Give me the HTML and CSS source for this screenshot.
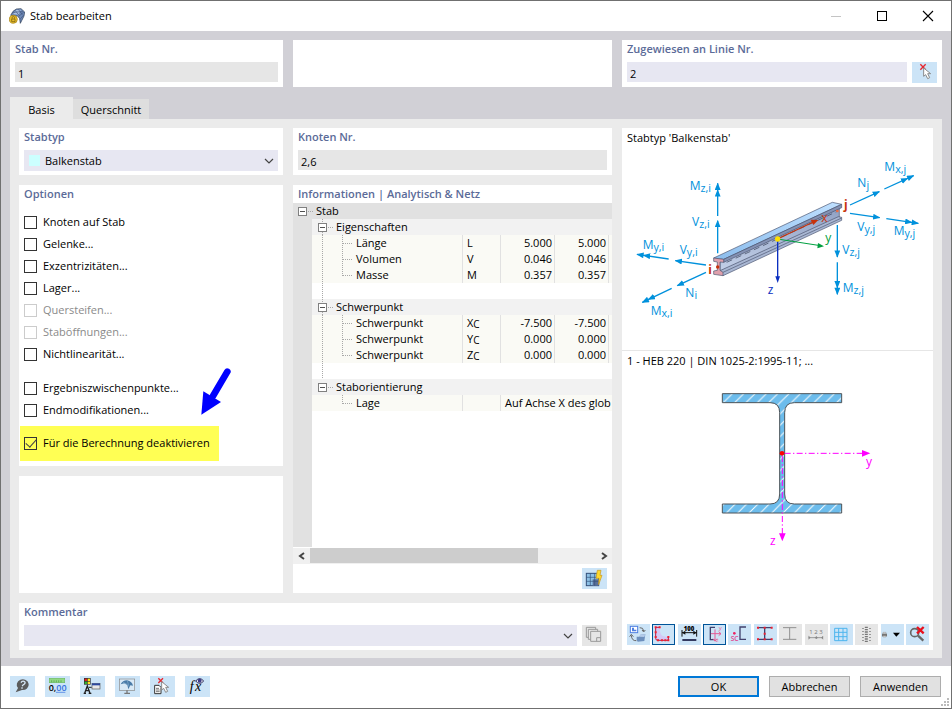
FILE: index.html
```
<!DOCTYPE html>
<html lang="de">
<head>
    <meta charset="UTF-8">
    <meta name="viewport" content="width=device-width, initial-scale=1.0">
    <title>Stab bearbeiten</title>
    <link rel="stylesheet" href="styles.css">
</head>
<body>
    <!-- tree symbols used by the information table -->
    <svg class="defs" aria-hidden="true">
        <symbol id="t-box" viewBox="0 0 20 16">
            <rect x="5.5" y="4.5" width="8" height="8" fill="#fff" stroke="#808080"/>
            <path d="M7 8.5h5" stroke="#505050"/>
            <path d="M15 8.5h5" stroke="#a8a8a8" stroke-dasharray="1 1"/>
        </symbol>
        <symbol id="t-box-mid" viewBox="0 0 20 16">
            <path d="M9.5 0v4M9.5 13v3" stroke="#a8a8a8" stroke-dasharray="1 1"/>
            <use href="#t-box" width="20" height="16"/>
        </symbol>
        <symbol id="t-line" viewBox="0 0 20 16">
            <path d="M9.5 0v16" stroke="#a8a8a8" stroke-dasharray="1 1"/>
        </symbol>
        <symbol id="t-tee" viewBox="0 0 20 16">
            <path d="M9.5 0v16M10 8.5h11" stroke="#a8a8a8" stroke-dasharray="1 1"/>
        </symbol>
        <symbol id="t-end" viewBox="0 0 20 16">
            <path d="M9.5 0v9M10 8.5h11" stroke="#a8a8a8" stroke-dasharray="1 1"/>
        </symbol>
        <symbol id="i-pick" viewBox="0 0 75 63">
            <path d="M25 7l16 16M41 7L25 23" stroke="#e8242c" stroke-width="4"/>
            <path d="M35 18v25l6-5 6 12 6-3-6-12h9z" fill="#fff" stroke="#8a8a8a" stroke-width="3"/>
        </symbol>
        <symbol id="i-caret" viewBox="0 0 12 8">
            <path d="M2 2l4 4 4-4" fill="none" stroke="#444" stroke-width="1.2"/>
        </symbol>
    </svg>

    <div class="window">
        <header class="titlebar">
            <svg class="app-icon" viewBox="0 0 48 48">
                <path d="M5 22L12 10 22 3 36 2 47 12 45 24 38 38 34 46 32 32 26 24z" fill="#6f8ab8" stroke="#26364f" stroke-width="2"/>
                <path d="M12 18L22 6 36 5 28 20z" fill="#a9bfe2"/>
                <path d="M30 24l14-11M33 34l10-12M18 7l12 15M28 4l12 16M10 15l12-3 20-1" fill="none" stroke="#40557c" stroke-width="2"/>
                <circle cx="13" cy="34" r="12" fill="#e7bd2c" stroke="#a17d10" stroke-width="2"/>
                <path d="M9 32v-4q4-5 8 0v4M8 33h10v8H8z" fill="none" stroke="#6d540c" stroke-width="2"/>
            </svg>
            <h1>Stab bearbeiten</h1>
            <div class="win-buttons">
                <button type="button" aria-label="Minimieren" disabled><svg viewBox="0 0 12 12"><path d="M1 6.5h10" stroke="#c4c4c4"/></svg></button>
                <button type="button" aria-label="Maximieren"><svg viewBox="0 0 12 12"><rect x="1.5" y="1.5" width="9" height="9" fill="none" stroke="#000"/></svg></button>
                <button type="button" aria-label="Schließen"><svg viewBox="0 0 12 12"><path d="M1 1l10 10M11 1L1 11" stroke="#000" stroke-width="1.1"/></svg></button>
            </div>
        </header>

        <main class="content">
            <div class="top-row">
                <section class="panel">
                    <label class="caption" for="stabNr">Stab Nr.</label>
                    <input class="field readonly" type="text" id="stabNr" value="1" readonly>
                </section>
                <section class="panel"></section>
                <section class="panel">
                    <label class="caption" for="linieNr">Zugewiesen an Linie Nr.</label>
                    <div class="field-row">
                        <input class="field" type="text" id="linieNr" value="2">
                        <button type="button" class="tool" aria-label="Linie auswählen"><svg viewBox="0 0 75 63"><use href="#i-pick" width="75" height="63"/></svg></button>
                    </div>
                </section>
            </div>

            <nav class="tabs">
                <button type="button" class="tab active">Basis</button>
                <button type="button" class="tab">Querschnitt</button>
            </nav>

            <div class="page">
                <section class="panel type">
                    <label class="caption" for="stabtyp">Stabtyp</label>
                    <div class="combo">
                        <span class="swatch"></span>
                        <select id="stabtyp"><option>Balkenstab</option></select>
                        <svg class="caret"><use href="#i-caret"/></svg>
                    </div>
                </section>

                <section class="panel nodes">
                    <label class="caption" for="knotenNr">Knoten Nr.</label>
                    <input class="field readonly" type="text" id="knotenNr" value="2,6" readonly>
                </section>

                <section class="panel options">
                    <h2 class="caption">Optionen</h2>
                    <div class="checks">
                        <label><input type="checkbox">Knoten auf Stab</label>
                        <label><input type="checkbox">Gelenke...</label>
                        <label><input type="checkbox">Exzentrizitäten...</label>
                        <label><input type="checkbox">Lager...</label>
                        <label class="off"><input type="checkbox" disabled>Quersteifen...</label>
                        <label class="off"><input type="checkbox" disabled>Staböffnungen...</label>
                        <label><input type="checkbox">Nichtlinearität...</label>
                    </div>
                    <div class="checks">
                        <label><input type="checkbox">Ergebniszwischenpunkte...</label>
                        <label><input type="checkbox">Endmodifikationen...</label>
                    </div>
                    <div class="marked">
                        <label><input type="checkbox" checked>Für die Berechnung deaktivieren</label>
                        <svg class="pointer" viewBox="0 0 90 141">
                            <path d="M79 11L36 84" stroke="#0000ff" stroke-width="20" stroke-linecap="round"/>
                            <path d="M1 140L7 70 60 102z" fill="#0000ff"/>
                        </svg>
                    </div>
                </section>

                <section class="panel blank"></section>

                <section class="panel info">
                    <h2 class="caption">Informationen | Analytisch &amp; Netz</h2>
                    <div class="tree">
                        <table>
                            <colgroup>
                                <col class="c-edge"><col class="c-name"><col class="c-sym"><col class="c-val"><col class="c-val"><col>
                            </colgroup>
                            <tbody>
                                <tr class="root"><th colspan="6"><svg><use href="#t-box"/></svg>Stab</th></tr>
                                <tr class="group"><td></td><th colspan="5"><svg><use href="#t-box-mid"/></svg>Eigenschaften</th></tr>
                                <tr><td></td><th><svg><use href="#t-line"/></svg><svg><use href="#t-tee"/></svg>Länge</th><td>L</td><td>5.000</td><td>5.000</td><td></td></tr>
                                <tr><td></td><th><svg><use href="#t-line"/></svg><svg><use href="#t-tee"/></svg>Volumen</th><td>V</td><td>0.046</td><td>0.046</td><td></td></tr>
                                <tr><td></td><th><svg><use href="#t-line"/></svg><svg><use href="#t-end"/></svg>Masse</th><td>M</td><td>0.357</td><td>0.357</td><td></td></tr>
                                <tr class="space"><td></td><th colspan="5"><svg><use href="#t-line"/></svg></th></tr>
                                <tr class="group"><td></td><th colspan="5"><svg><use href="#t-box-mid"/></svg>Schwerpunkt</th></tr>
                                <tr><td></td><th><svg><use href="#t-line"/></svg><svg><use href="#t-tee"/></svg>Schwerpunkt</th><td>X<sub>C</sub></td><td>-7.500</td><td>-7.500</td><td></td></tr>
                                <tr><td></td><th><svg><use href="#t-line"/></svg><svg><use href="#t-tee"/></svg>Schwerpunkt</th><td>Y<sub>C</sub></td><td>0.000</td><td>0.000</td><td></td></tr>
                                <tr><td></td><th><svg><use href="#t-line"/></svg><svg><use href="#t-end"/></svg>Schwerpunkt</th><td>Z<sub>C</sub></td><td>0.000</td><td>0.000</td><td></td></tr>
                                <tr class="space"><td></td><th colspan="5"><svg><use href="#t-line"/></svg></th></tr>
                                <tr class="group"><td></td><th colspan="5"><svg><use href="#t-box"/></svg>Staborientierung</th></tr>
                                <tr><td></td><th><svg></svg><svg><use href="#t-end"/></svg>Lage</th><td></td><td class="text" colspan="3">Auf Achse X des glob</td></tr>
                            </tbody>
                        </table>
                    </div>
                    <div class="scrollbar">
                        <button type="button" aria-label="Nach links"><svg viewBox="0 0 8 8"><path d="M6 1L2 4l4 3" fill="none" stroke="#444" stroke-width="2"/></svg></button>
                        <div class="track"><div class="thumb"></div></div>
                        <button type="button" aria-label="Nach rechts"><svg viewBox="0 0 8 8"><path d="M2 1l4 3-4 3" fill="none" stroke="#444" stroke-width="2"/></svg></button>
                    </div>
                    <div class="info-tools">
                        <button type="button" class="tool" aria-label="Netz berechnen">
                            <svg viewBox="0 0 75 63">
                                <rect x="13" y="16" width="37" height="37" fill="#8cc0e6" stroke="#33507a" stroke-width="3"/>
                                <path d="M32 34h18v19H32z" fill="#5a7099"/>
                                <path d="M25 16v37M38 16v37M13 28h37M13 40h37" stroke="#33507a" stroke-width="2"/>
                                <path d="M46 7h11l-3 15h6L50 50l1-19h-9z" fill="#ffd92e" stroke="#c9961a" stroke-width="2"/>
                            </svg>
                        </button>
                    </div>
                </section>

                <section class="panel comment">
                    <label class="caption" for="kommentar">Kommentar</label>
                    <div class="field-row">
                        <div class="combo">
                            <select id="kommentar"><option></option></select>
                            <svg class="caret"><use href="#i-caret"/></svg>
                        </div>
                        <button type="button" class="tool inactive" aria-label="Kommentare" disabled>
                            <svg viewBox="0 0 75 63">
                                <path d="M20 37h-7V7h28v6M26 43h-7V13h28v6" fill="none" stroke="#999" stroke-width="3"/>
                                <path d="M26 19h30v30H26zM56 38H44v11" fill="none" stroke="#999" stroke-width="3"/>
                            </svg>
                        </button>
                    </div>
                </section>

                <section class="panel preview">
                    <div class="beam">
                        <h3>Stabtyp 'Balkenstab'</h3>
                        <svg viewBox="0 0 933 600">
                            <defs>
                                <linearGradient id="top" x1="0" y1="1" x2="1" y2="0"><stop offset="0" stop-color="#8dbdec"/><stop offset="1" stop-color="#bfe0ff"/></linearGradient>
                                <linearGradient id="web" x1="0" y1="0" x2="0" y2="1"><stop offset="0" stop-color="#8e9fc2"/><stop offset="1" stop-color="#c3d0e8"/></linearGradient>
                                <marker id="a" markerUnits="userSpaceOnUse" viewBox="0 0 20 16" markerWidth="22" markerHeight="18" refX="18" refY="8" orient="auto"><path d="M0 0l20 8-20 8z" fill="#0091dc"/></marker>
                                <marker id="aa" markerUnits="userSpaceOnUse" viewBox="0 0 38 16" markerWidth="42" markerHeight="18" refX="36" refY="8" orient="auto"><path d="M0 0l20 8-20 8zM18 0l20 8-20 8z" fill="#0091dc"/></marker>
                            </defs>
                            <g transform="translate(-6 0)">
                                <!-- beam body -->
                                <g stroke="#4b5470" stroke-width="2" stroke-linejoin="round">
                                    <path d="M300 330L658 168 658 202 300 364z" fill="url(#web)"/>
                                    <path d="M300 362L655 200 665 202 665 211 309 377z" fill="#a9b7d3"/>
                                    <path d="M309 367L665 204" fill="none"/>
                                    <path d="M281 324L637 157 665 163 311 328z" fill="url(#top)"/>
                                    <path d="M311 328L665 163 665 173 311 337z" fill="#8492b4"/>
                                    <path d="M281 324l30 4v9l-11-1v25l9 6v10l-28-4v-10l11-2v-25l-11-2z" fill="#dfa0ac"/>
                                </g>
                                <path d="M320 337L650 185" stroke="#333c55" stroke-width="2" stroke-dasharray="18 12"/>
                                <circle cx="293" cy="351" r="5" fill="#c8320a"/>
                                <circle cx="652" cy="183" r="4" fill="#f06a3c"/>
                                <!-- internal forces -->
                                <g stroke="#0091dc" stroke-width="4" fill="none">
                                    <path d="M293 198V100" marker-end="url(#aa)"/>
                                    <path d="M293 310V212" marker-end="url(#a)"/>
                                    <path d="M258 345L166 332" marker-end="url(#a)"/>
                                    <path d="M146 327L51 313" marker-end="url(#aa)"/>
                                    <path d="M258 367L172 407" marker-end="url(#a)"/>
                                    <path d="M155 415L67 457" marker-end="url(#aa)"/>
                                    <path d="M690 165L778 125" marker-end="url(#a)"/>
                                    <path d="M793 117L881 77" marker-end="url(#aa)"/>
                                    <path d="M690 190L779 203" marker-end="url(#a)"/>
                                    <path d="M799 206L895 220" marker-end="url(#aa)"/>
                                    <path d="M652 225V321" marker-end="url(#a)"/>
                                    <path d="M652 337V433" marker-end="url(#aa)"/>
                                </g>
                                <!-- local axes -->
                                <path d="M472 267L580 216" stroke="#c8320a" stroke-width="4"/><path d="M595 210l-23-1 8 16z" fill="#c8320a"/>
                                <path d="M472 267L595 286" stroke="#00a040" stroke-width="3"/><path d="M612 289l-18-10-2 16z" fill="#00a040"/>
                                <path d="M473 267V385" stroke="#0a2fc0" stroke-width="4"/><path d="M473 399l-7-20h14z" fill="#0a2fc0"/>
                                <circle cx="473" cy="267" r="8" fill="#ffe000"/>
                                <g class="force">
                                    <text x="209" y="121">M<tspan dy="6">z,i</tspan></text>
                                    <text x="216" y="229">V<tspan dy="6">z,i</tspan></text>
                                    <text x="68" y="298">M<tspan dy="6">y,i</tspan></text>
                                    <text x="179" y="312">V<tspan dy="6">y,i</tspan></text>
                                    <text x="196" y="441">N<tspan dy="6">i</tspan></text>
                                    <text x="92" y="494">M<tspan dy="6">x,i</tspan></text>
                                    <text x="712" y="111">N<tspan dy="6">j</tspan></text>
                                    <text x="793" y="62">M<tspan dy="6">x,j</tspan></text>
                                    <text x="712" y="242">V<tspan dy="6">y,j</tspan></text>
                                    <text x="821" y="256">M<tspan dy="6">y,j</tspan></text>
                                    <text x="667" y="313">V<tspan dy="6">z,j</tspan></text>
                                    <text x="668" y="425">M<tspan dy="6">z,j</tspan></text>
                                </g>
                                <g class="axis">
                                    <text class="end" x="265" y="372">i</text>
                                    <text class="end" x="672" y="177">j</text>
                                    <text x="604" y="215" fill="#c8320a">x</text>
                                    <text x="616" y="276" fill="#00a040">y</text>
                                    <text x="443" y="431" fill="#0a2fc0">z</text>
                                </g>
                            </g>
                        </svg>
                    </div>
                    <div class="section">
                        <h3>1 - HEB 220 | DIN 1025-2:1995-11; ...</h3>
                        <svg viewBox="0 0 933 564">
                            <defs>
                                <pattern id="hatch" width="34" height="34" patternUnits="userSpaceOnUse" patternTransform="translate(8 14)">
                                    <rect width="34" height="34" fill="#6cbcec"/>
                                    <path d="M-2 36L36 -2M-5 5L5 -5M29 39L39 29" stroke="#fff" stroke-width="3"/>
                                </pattern>
                            </defs>
                            <g transform="translate(-6 -96)">
                                <path d="M307 161H665V188H523Q494 188 494 218V462Q494 492 523 492H665V519H307V492H450Q479 492 479 462V218Q479 188 450 188H307z" fill="url(#hatch)" stroke="#4c5358" stroke-width="3"/>
                                <path d="M494 340H728" stroke="#ff00ff" stroke-width="3" stroke-dasharray="18 7 4 7"/>
                                <path d="M487 348V582" stroke="#ff00ff" stroke-width="3" stroke-dasharray="18 7 4 7"/>
                                <path d="M726 330L751 340 726 350zM477 580L487 604 497 580z" fill="#ff00ff"/>
                                <circle cx="486" cy="340" r="7" fill="#ff0000"/>
                                <g class="axis" fill="#ff00ff">
                                    <text x="738" y="377">y</text>
                                    <text x="450" y="614">z</text>
                                </g>
                            </g>
                        </svg>
                    </div>
                    <div class="preview-tools">
                        <button type="button" class="tool" aria-label="Ansicht wechseln">
                            <svg viewBox="0 0 69 63">
                                <rect x="10" y="7" width="22" height="19" fill="#fff" stroke="#4f7fe0" stroke-width="3"/><path d="M15 22V11h6v6h7v5z" fill="#4f7fe0"/>
                                <path d="M38 11q11-1 12 10M45 18l5 6 5-6M28 50q-14 1-15-16M8 38l5-7 6 7" fill="none" stroke="#666" stroke-width="3"/>
                                <path d="M29 38l8 0 3-6 15-1-3 20-20 2-3-5z" fill="#6d8fbd"/><path d="M37 38l3-6 15-1-3 8z" fill="#b4cbea"/>
                            </svg>
                        </button>
                        <button type="button" class="tool on" aria-label="Querschnitt">
                            <svg viewBox="0 0 69 63">
                                <path d="M11 9h12q0 26 12 28l15 2v10H11z" fill="#d3c9f5"/>
                                <path d="M24 10H11v33q0 6 6 6h32V38" fill="none" stroke="#b01c48" stroke-width="3"/>
                                <path d="M8 7h6v6H8zM20 7h6v6h-6zM8 22h6v6H8zM8 36h6v6H8zM15 46h6v6h-6zM27 46h6v6h-6zM37 46h6v6h-6zM46 46h6v6h-6zM46 36h6v6h-6z" fill="#f02030"/>
                            </svg>
                        </button>
                        <button type="button" class="tool" aria-label="Bemaßung">
                            <svg viewBox="0 0 69 63">
                                <text class="dim" x="33" y="20">100</text>
                                <path d="M12 18v20M56 18v20M12 26h44" stroke="#111" stroke-width="3"/><path d="M12 26l10-6v12zM56 26l-10-6v12z" fill="#111"/>
                                <path d="M13 48h42" stroke="#333a60" stroke-width="6"/>
                            </svg>
                        </button>
                        <button type="button" class="tool on" aria-label="Hauptachsen">
                            <svg viewBox="0 0 69 63">
                                <path d="M36 10H22v37h12" fill="none" stroke="#42426e" stroke-width="4"/>
                                <path d="M24 29h30M36 16v36M47 23l7 6-7 6M30 44l6 7 6-7" fill="none" stroke="#e65a96" stroke-width="3"/>
                                <text class="tiny" x="47" y="19">y</text><text class="tiny" x="38" y="53">z</text>
                            </svg>
                        </button>
                        <button type="button" class="tool" aria-label="Schubmittelpunkt">
                            <svg viewBox="0 0 69 63">
                                <path d="M54 9H36v37h18" fill="none" stroke="#42426e" stroke-width="4"/>
                                <circle cx="19" cy="28" r="4" fill="#ee2060"/><text class="sc" x="8" y="52">SC</text>
                            </svg>
                        </button>
                        <button type="button" class="tool" aria-label="Punkte">
                            <svg viewBox="0 0 69 63">
                                <path d="M11 11h42M11 46h42M32 11v35" stroke="#42426e" stroke-width="4"/>
                                <path d="M9 8h6v6H9zM29 8h6v6h-6zM50 8h6v6h-6zM29 26h6v6h-6zM9 43h6v6H9zM29 43h6v6h-6zM50 43h6v6h-6z" fill="#ee2030"/>
                            </svg>
                        </button>
                        <button type="button" class="tool inactive" aria-label="Spannungspunkte" disabled>
                            <svg viewBox="0 0 69 63"><path d="M12 11h40M12 46h40M32 11v35" stroke="#909090" stroke-width="3"/></svg>
                        </button>
                        <button type="button" class="tool inactive" aria-label="Nummerierung" disabled>
                            <svg viewBox="0 0 69 63">
                                <text class="num" x="33" y="29">1 2 3</text>
                                <path d="M11 41h43" stroke="#999" stroke-width="3"/><path d="M11 36v10l5-5zM30 41l4-4 4 4-4 4zM54 36v10l-5-5z" fill="#888" stroke="#888"/>
                            </svg>
                        </button>
                        <button type="button" class="tool" aria-label="Raster">
                            <svg viewBox="0 0 69 63"><path d="M14 13h37v37H14zM26 13v37M39 13v37M14 25h37M14 38h37" fill="none" stroke="#4db5ee" stroke-width="3"/></svg>
                        </button>
                        <button type="button" class="tool inactive" aria-label="Werte" disabled>
                            <svg viewBox="0 0 69 63">
                                <path d="M34 8v46" stroke="#777" stroke-width="9" stroke-dasharray="4 3"/>
                                <path d="M24 12v40M45 12v40" stroke="#999" stroke-width="6" stroke-dasharray="3 6"/>
                            </svg>
                        </button>
                        <button type="button" class="tool" aria-label="Drucken">
                            <svg viewBox="0 0 69 63">
                                <path d="M3 29h15v8H3z" fill="#777"/><path d="M6 25h9v4H6zM6 35h9v4H6z" fill="#ddd" stroke="#777"/>
                                <path d="M36 26h21L46 38z" fill="#000"/>
                            </svg>
                        </button>
                        <button type="button" class="tool" aria-label="Ansicht zurücksetzen">
                            <svg viewBox="0 0 69 63">
                                <circle cx="26" cy="26" r="12" fill="none" stroke="#666" stroke-width="5"/>
                                <path d="M36 35l16 15" stroke="#666" stroke-width="7"/>
                                <path d="M33 9l20 19M53 9L33 28" stroke="#e8101c" stroke-width="7"/>
                            </svg>
                        </button>
                    </div>
                </section>
            </div>
        </main>

        <footer class="footer">
            <div class="footer-tools">
                <button type="button" class="tool" aria-label="Hilfe">
                    <svg viewBox="0 0 75 63">
                        <path d="M17 49l7-13A18 16 0 1 1 36 42z" fill="#5c5c5c"/>
                        <path d="M33 20q3-6 9-4 6 3 1 8l-5 4-1 3M36 34v4" fill="none" stroke="#d8e8f6" stroke-width="4"/>
                    </svg>
                </button>
                <button type="button" class="tool" aria-label="Einheiten und Dezimalstellen">
                    <svg viewBox="0 0 75 63">
                        <rect x="13" y="7" width="46" height="13" fill="#91d884" stroke="#6cbc60" stroke-width="2"/>
                        <path d="M20 13v6M27 13v6M34 13v6M41 13v6M48 13v6" stroke="#4a9a40" stroke-width="2"/>
                        <text class="zero" x="11" y="45">0,<tspan fill="#3470e0">00</tspan></text>
                        <path d="M33 49h28" stroke="#3470e0" stroke-width="2"/>
                    </svg>
                </button>
                <button type="button" class="tool" aria-label="Darstellung">
                    <svg viewBox="0 0 75 63">
                        <path d="M12 6h20v20H12z" fill="#333"/><path d="M14 8h7v7h-7z" fill="#e02020"/><path d="M23 8h7v7h-7z" fill="#ffe020"/><path d="M14 17h7v7h-7z" fill="#30b030"/><path d="M23 17h7v7h-7z" fill="#ffe020"/>
                        <path d="M14 52l8-22 8 22M17 44h10M11 52h7M26 52h8" fill="none" stroke="#222" stroke-width="4"/>
                        <rect x="36" y="22" width="24" height="17" fill="#e8e8e8" stroke="#555" stroke-width="2"/><path d="M36 22h24v6H36z" fill="#2b48a0"/><path d="M27 34h8" stroke="#222" stroke-width="3"/>
                    </svg>
                </button>
                <button type="button" class="tool" aria-label="Ansicht">
                    <svg viewBox="0 0 75 63">
                        <rect x="13" y="9" width="46" height="34" fill="#d9e9f6" stroke="#888" stroke-width="2"/>
                        <path d="M36 43v7M28 52h17" stroke="#777" stroke-width="4"/>
                        <path d="M17 25q6-12 19-12 16 4 18 16l-8-1-6 12-3-13-9-5z" fill="#4a7ba8"/><path d="M24 19l14 7M37 14l5 18" stroke="#86aecf" stroke-width="2"/>
                    </svg>
                </button>
                <button type="button" class="tool" aria-label="Objekt wählen">
                    <svg viewBox="0 0 75 63">
                        <path d="M25 7l14 14M39 7L25 21" stroke="#e8242c" stroke-width="4"/>
                        <path d="M14 28h13l6 6v19H14z" fill="#fff" stroke="#333" stroke-width="3"/><path d="M18 37h9M18 42h11M18 47h11" stroke="#333" stroke-width="2"/>
                        <path d="M35 17v25l6-5 6 12 6-3-6-12h9z" fill="#fff" stroke="#8a8a8a" stroke-width="3"/>
                    </svg>
                </button>
                <button type="button" class="tool" aria-label="Formeln">
                    <svg viewBox="0 0 75 63">
                        <text class="fx" x="14" y="45">f<tspan x="30">x</tspan></text>
                        <path d="M32 15q12-14 24 0-12 14-24 0z" fill="#fff" stroke="#28285a" stroke-width="3"/><circle cx="44" cy="14" r="6" fill="#3c3c86"/>
                    </svg>
                </button>
            </div>
            <div class="actions">
                <button type="button" class="btn primary">OK</button>
                <button type="button" class="btn">Abbrechen</button>
                <button type="button" class="btn">Anwenden</button>
            </div>
            <svg class="grip" viewBox="0 0 8 8"><path d="M6 0h2v2H6zM3 3h2v2H3zM6 3h2v2H6zM0 6h2v2H0zM3 6h2v2H3zM6 6h2v2H6z" fill="#bbb"/></svg>
        </footer>
    </div>
</body>
</html>
```
FILE: styles.css
```
* {
    box-sizing: border-box;
}

body {
    margin: 0;
    font-family: "Open Sans", "Noto Sans", sans-serif;
    font-size: 11px;
    line-height: 16px;
    color: #000;
}

button, input, select {
    font: inherit;
    color: inherit;
    margin: 0;
}

button {
    padding: 0;
    border: none;
    background: none;
}

h1, h2, h3 {
    margin: 0;
    font-size: 11px;
    font-weight: normal;
}

svg {
    display: block;
}

.defs {
    position: absolute;
    width: 0;
    height: 0;
}

.window {
    display: flex;
    flex-direction: column;
    min-height: 100vh;
    border: 1px solid #707070;
    background-color: #fff;
}

/* title bar */
.titlebar {
    display: flex;
    align-items: center;
    height: 30px;
    padding-left: 8px;
}

.app-icon {
    width: 16px;
    height: 16px;
    margin-right: 5px;
}

.titlebar h1 {
    flex: 1;
}

.win-buttons {
    display: flex;
}

.win-buttons button {
    display: flex;
    align-items: center;
    justify-content: center;
    width: 46px;
    height: 28px;
}

.win-buttons svg {
    width: 12px;
    height: 12px;
}

/* main area */
.content {
    flex: 1;
    display: flex;
    flex-direction: column;
    padding: 9px 9px 8px;
    background-color: #d1d0d6;
}

.top-row {
    display: grid;
    grid-template-columns: 273fr 319fr 320fr;
    gap: 10px;
}

.panel {
    min-width: 0;
    padding: 0 5px 4px;
    background-color: #fff;
}

.caption {
    display: block;
    height: 22px;
    line-height: 18px;
    font-weight: 600;
    color: #5b6b98;
}

.field {
    display: block;
    width: 100%;
    height: 20px;
    padding: 2px 3px 0;
    border: none;
    background-color: #e7e7f2;
}

.field.readonly {
    background-color: #e6e6e6;
}

.field-row {
    display: flex;
    gap: 5px;
}

.field-row .field, .field-row .combo {
    flex: 1;
    width: auto;
    min-width: 0;
}

.combo {
    display: flex;
    align-items: center;
    height: 21px;
    padding: 0 3px 0 5px;
    background-color: #e7e7f2;
}

.combo select {
    flex: 1;
    min-width: 0;
    height: 21px;
    padding: 0 0 0 5px;
    border: none;
    background: none;
    appearance: none;
}

.swatch {
    width: 11px;
    height: 11px;
    background-color: #ccffff;
}

.caret {
    width: 12px;
    height: 8px;
    pointer-events: none;
}

.tool {
    flex: none;
    width: 25px;
    height: 21px;
    background-color: #cce4f7;
}

.tool svg {
    width: 100%;
    height: 100%;
}

.tool.inactive {
    background-color: #e6e6e6;
}

.tool.on {
    outline: 1px solid #005499;
    outline-offset: -1px;
}

/* tabs */
.tabs {
    display: flex;
    align-items: flex-end;
    height: 32px;
    padding-top: 10px;
}

.tab {
    width: 76px;
    height: 20px;
    padding-top: 1px;
    background-color: #dedede;
}

.tab.active {
    width: 63px;
    height: 22px;
    padding-top: 3px;
    background-color: #ebebeb;
}

.page {
    flex: 1;
    display: grid;
    grid-template-columns: 264fr 319fr 311fr;
    grid-template-rows: auto auto 1fr auto;
    grid-template-areas:
        "type nodes preview"
        "options info preview"
        "blank info preview"
        "comment comment preview";
    gap: 10px;
    padding: 9px 9px 8px;
    background-color: #ebebeb;
}

.type { grid-area: type; }
.nodes { grid-area: nodes; }
.options { grid-area: options; }
.blank { grid-area: blank; }
.comment { grid-area: comment; }

/* options */
.options {
    padding-bottom: 5px;
}

.checks {
    margin-bottom: 12px;
}

.options .caption {
    height: 26px;
}

.options label {
    display: flex;
    align-items: center;
    gap: 6px;
    height: 22px;
}

.options label.off {
    color: #8a8a8a;
}

.options input {
    display: grid;
    place-items: center;
    width: 13px;
    height: 13px;
    border: 1px solid #333;
    background-color: #fff;
    appearance: none;
}

.options input:disabled {
    border-color: #ccc;
}

.options input:checked {
    background-color: transparent;
}

.options input:checked::before {
    content: "";
    width: 9px;
    height: 5px;
    margin-bottom: 3px;
    border: solid #444;
    border-width: 0 0 1px 1px;
    transform: rotate(-48deg);
}

.marked {
    position: relative;
    width: 199px;
    height: 35px;
    margin: -7px 0 0 -4px;
    padding: 6px 4px;
    background-color: #ffff54;
}

.pointer {
    position: absolute;
    left: 181px;
    top: -58px;
    width: 30px;
    height: 47px;
}

/* information tree */
.info {
    grid-area: info;
    display: flex;
    flex-direction: column;
    padding: 0;
}

.info .caption {
    height: 18px;
    padding-left: 5px;
}

.tree {
    flex: 1;
    overflow: hidden;
    background: linear-gradient(to right, #e1e1e1 19px, #fff 19px);
}

.tree table {
    width: 403px;
    table-layout: fixed;
    border-collapse: separate;
    border-spacing: 0;
}

.c-edge { width: 19px; }
.c-name { width: 151px; }
.c-sym { width: 38px; }
.c-val { width: 54px; }

.tree td, .tree th {
    height: 16px;
    padding: 0 3px 0 4px;
    border-right: 1px solid #e1e1e1;
    background-color: #fafaf5;
    font-weight: normal;
    text-align: left;
    line-height: 16px;
    white-space: nowrap;
}

.tree th {
    padding-left: 1px;
}

.tree td:first-child {
    padding: 0;
    border: none;
    background-color: #e1e1e1;
}

.tree td:nth-child(n+4) {
    padding-right: 2px;
    text-align: right;
}

.tree td.text {
    text-align: left;
}

.tree th svg {
    float: left;
    width: 20px;
    height: 16px;
}

.tree th svg:last-of-type {
    margin-right: 3px;
}

.tree .root th {
    padding-left: 0;
    background-color: #e1e1e1;
}

.tree .group th {
    background-color: #f2f2f2;
}

.tree .space th {
    background-color: #fff;
}

.tree sub {
    font-size: 10px;
    line-height: 10px;
    vertical-align: -1px;
}

.scrollbar {
    display: flex;
    height: 17px;
    border-top: 1px solid #fff;
    background-color: #f0f0f0;
}

.scrollbar button {
    display: flex;
    align-items: center;
    justify-content: center;
    width: 17px;
}

.scrollbar svg {
    width: 8px;
    height: 8px;
}

.track {
    flex: 1;
}

.thumb {
    width: 80%;
    height: 15px;
    background-color: #cdcdcd;
}

.info-tools {
    display: flex;
    justify-content: flex-end;
    padding: 4px 5px;
}

/* preview */
.preview {
    grid-area: preview;
    display: flex;
    flex-direction: column;
    padding: 0 0 5px;
}

.preview h3 {
    height: 22px;
    padding: 2px 5px;
}

.beam {
    border-bottom: 1px solid #e6e6e6;
}

.beam svg, .section svg {
    width: 100%;
}

.section {
    flex: 1;
}

.preview .section h3 {
    height: 21px;
}

.force {
    font-size: 36px;
    fill: #0091dc;
}

.force tspan {
    font-size: 32px;
}

.axis {
    font-size: 36px;
}

.axis .end {
    font-weight: 700;
    fill: #c8320a;
}

.preview-tools {
    display: flex;
    justify-content: space-between;
    padding: 0 4px 0 5px;
}

.preview-tools .tool {
    width: 23px;
}

.dim {
    font-size: 18px;
    font-weight: 800;
    text-anchor: middle;
}

.tiny {
    font-size: 18px;
    fill: #e65a96;
}

.sc {
    font-size: 20px;
    font-weight: 600;
    fill: #e0408a;
}

.num {
    font-size: 18px;
    fill: #777;
    text-anchor: middle;
}

.zero {
    font-size: 27px;
    font-weight: 600;
}

.fx {
    font-family: "Liberation Serif", serif;
    font-size: 42px;
    font-style: italic;
}

/* footer */
.footer {
    position: relative;
    display: flex;
    align-items: center;
    justify-content: space-between;
    padding: 10px 10px 11px 9px;
}

.footer-tools, .actions {
    display: flex;
    gap: 10px;
}

.btn {
    width: 81px;
    height: 21px;
    border: 1px solid #adadad;
    background-color: #e1e1e1;
}

.btn.primary {
    border: 2px solid #0078d7;
}

.grip {
    position: absolute;
    right: 2px;
    bottom: 2px;
    width: 8px;
    height: 8px;
}
```
